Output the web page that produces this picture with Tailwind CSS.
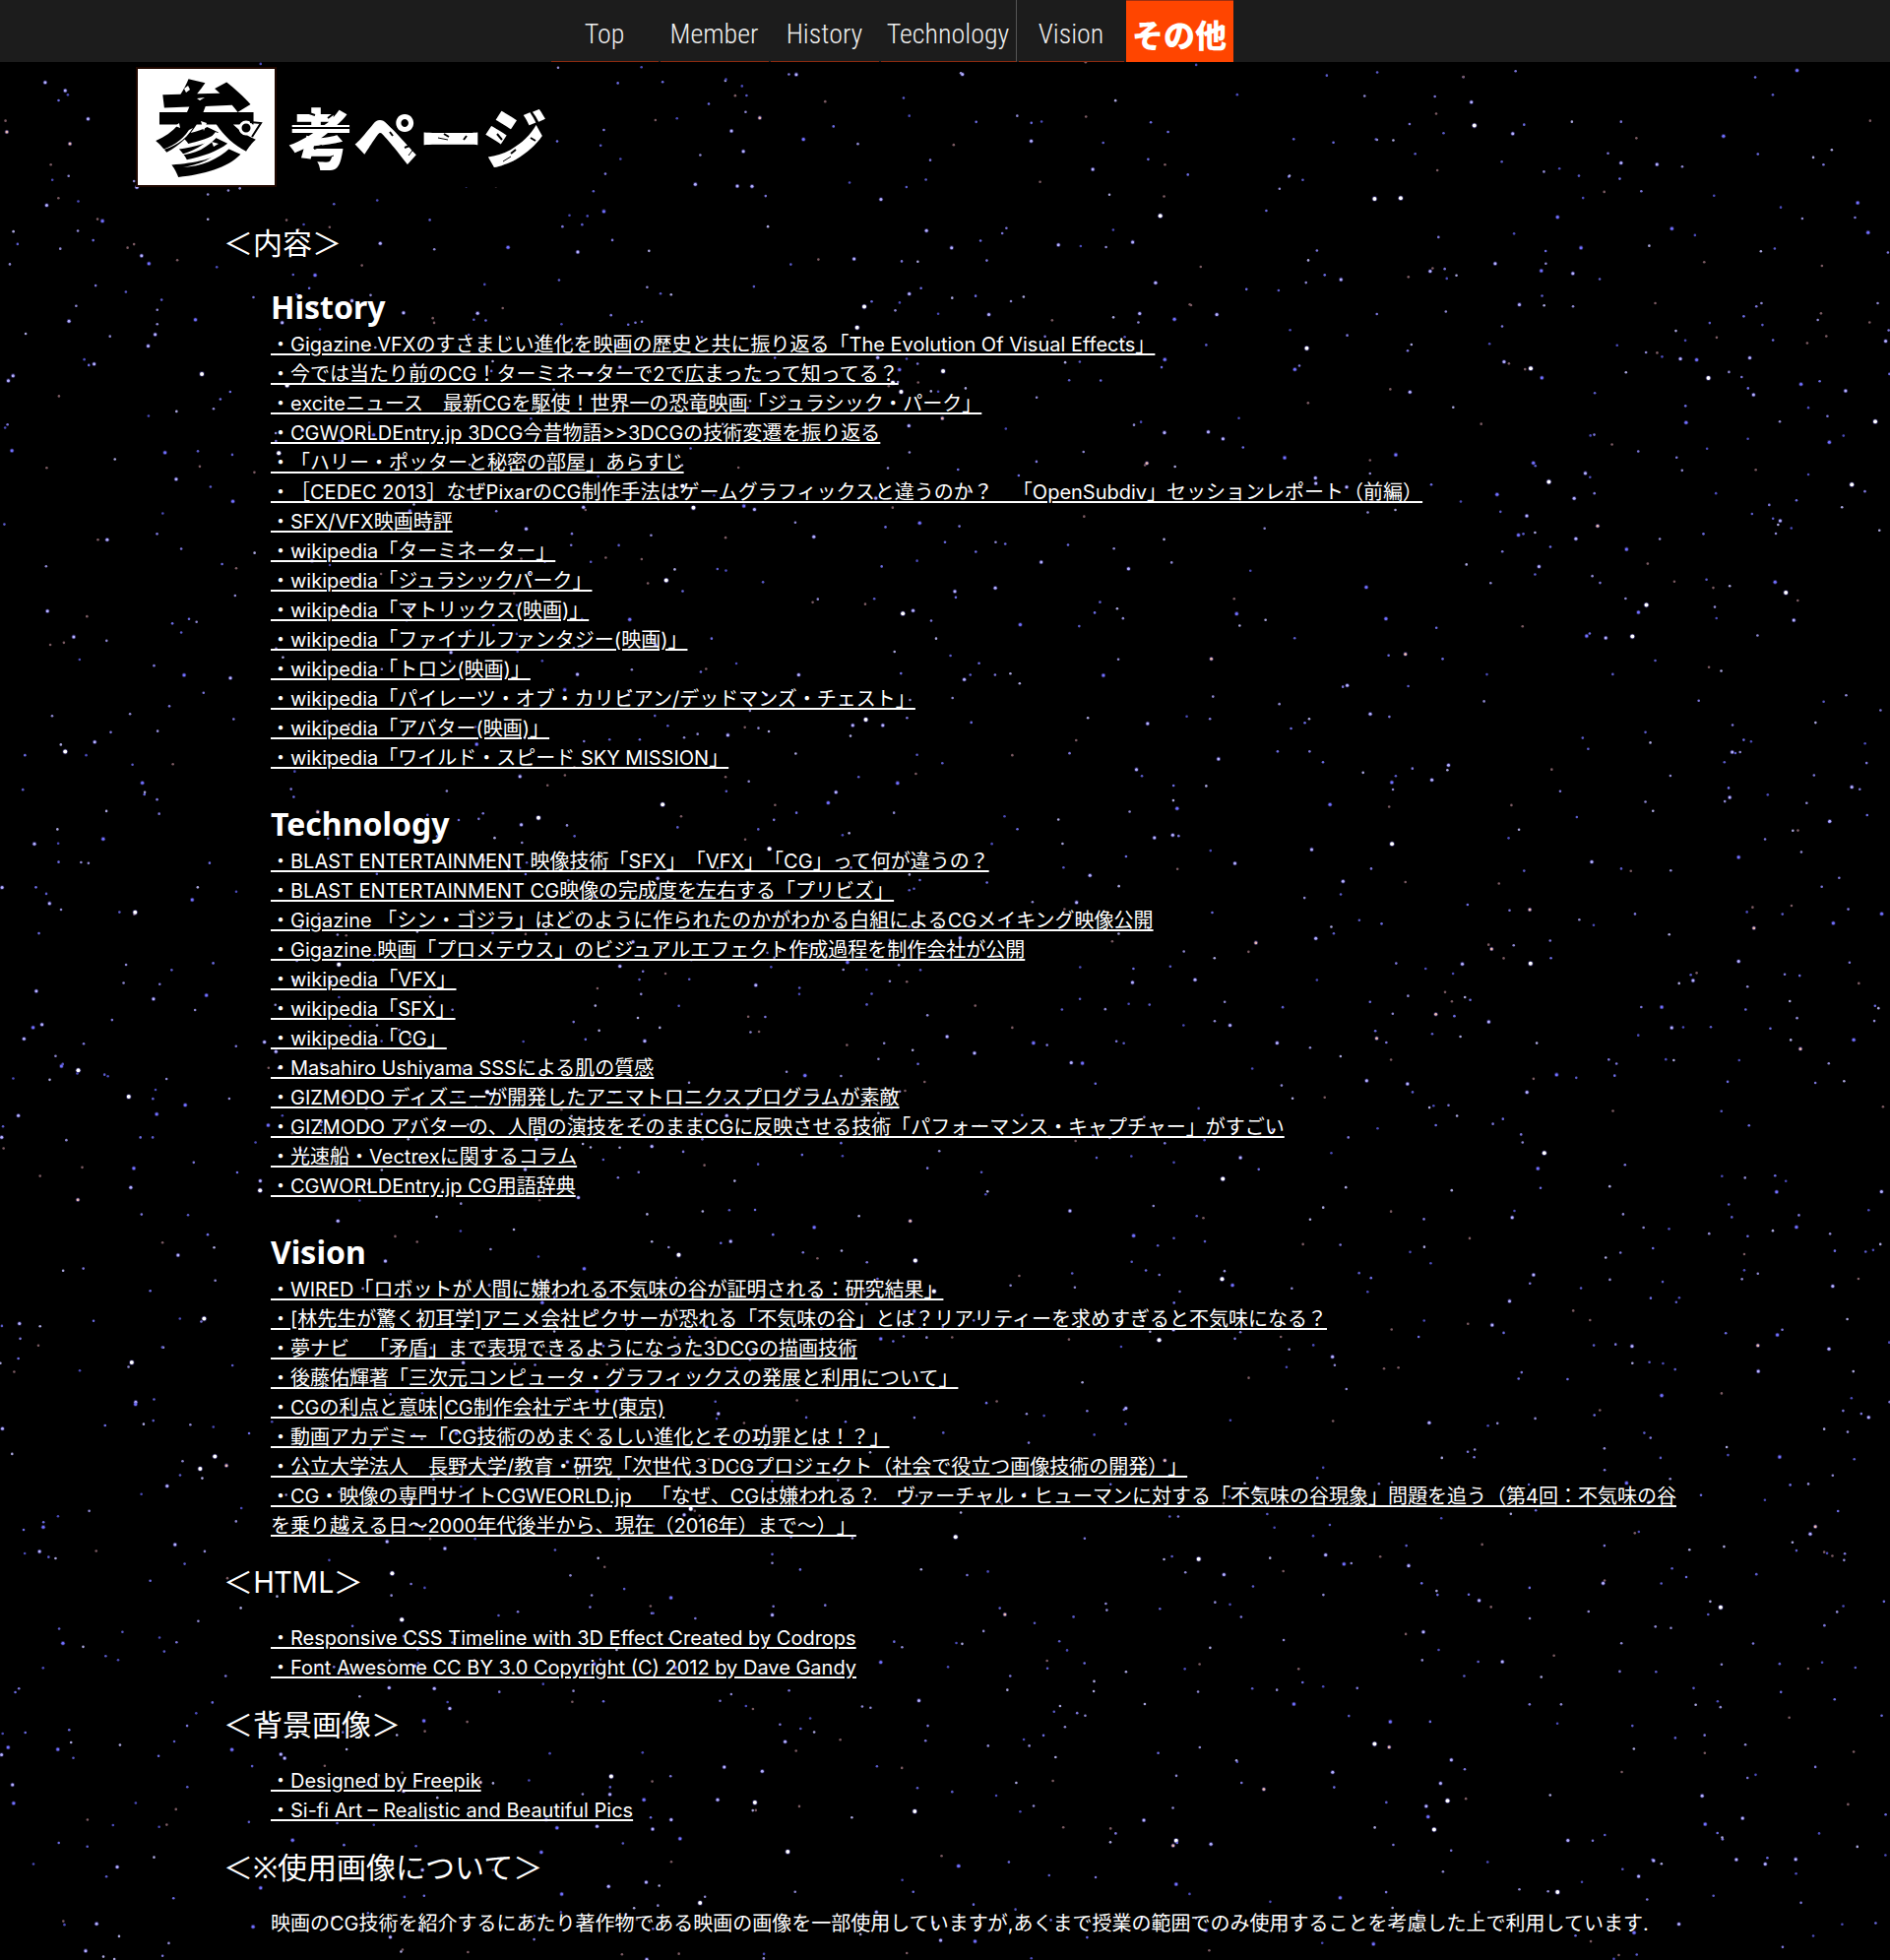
<!DOCTYPE html>
<html lang="ja">
<head>
<meta charset="utf-8">
<meta name="viewport" content="width=device-width, initial-scale=1">
<title>参考ページ</title>
<script src="https://cdn.jsdelivr.net/npm/@tailwindcss/browser@4"></script>
</head>
<body class="relative bg-black text-white font-['Noto_Sans','Noto_Sans_CJK_JP',sans-serif] text-[20px] leading-[30px] [text-spacing-trim:space-all]">
<svg id="stars" class="absolute inset-0 -z-10 h-full w-full" aria-hidden="true"></svg>

<nav class="flex h-[63px] justify-center gap-[2px] bg-[#1c1c1c] pr-[108px] font-['Roboto_Condensed','Liberation_Sans',sans-serif] text-[28px] leading-[70px] font-light text-[#eeeeee]">
  <a href="#" class="w-[109px] border-b border-[#8b2a10] text-center">Top</a>
  <a href="#" class="w-[110px] border-b border-[#8b2a10] text-center">Member</a>
  <a href="#" class="w-[110px] border-b border-[#8b2a10] text-center">History</a>
  <a href="#" class="w-[138px] border-b border-r border-b-[#8b2a10] border-r-[#555555] text-center">Technology</a>
  <a href="#" class="w-[107px] border-b border-[#8b2a10] text-center">Vision</a>
  <a href="#" class="w-[109px] border-t border-[#a03010] bg-[#ff4500] text-center font-['Noto_Sans_CJK_JP',sans-serif] text-[32px] leading-[67px] font-black text-white">その他</a>
</nav>

<header class="flex pt-[5px] pl-[138px]">
  <h1 class="flex items-start gap-3 bg-black font-['Noto_Sans_CJK_JP',sans-serif] font-black">
    <span class="relative block h-[122px] w-[143px] border-2 border-[#200800] bg-white text-center text-[104px] leading-[110px] text-black">参
      <svg class="absolute inset-0 h-full w-full" viewBox="0 0 139 118" fill="none" aria-hidden="true">
        <path d="M52 62C44 74 34 79 22 83C36 80 48 73 56 60ZM79 64C68 78 56 84 40 88C58 87 72 80 83 66ZM90 78C76 92 62 97 46 100C64 99 82 92 94 80Z" fill="#fff"/>
        <path d="M47 20l4-3 2 4-4 3zM60 30l8-1-5 3zM38 58l4-3 1 5zM64 53l6 2-3 8zM75 74l7 2-5 3z" fill="#fff"/>
        <circle cx="110" cy="60" r="6" fill="#000" stroke="#fff" stroke-width="3"/>
        <path d="M114 54l11 1-9 14" stroke="#000" stroke-width="2"/>
      </svg>
    </span>
    <span class="relative pt-[34px] text-[66px] leading-[70px]">考ページ
      <svg class="absolute top-[38px] left-0 h-[66px] w-[264px]" viewBox="0 0 264 66" fill="none" aria-hidden="true">
        <path d="M2 24h60M18 8l9 3M40 14l8-6M26 45l8-3M84 42l4 3M103 28l3 4M118 44l5-2M158 30l5 3M178 36l3-4M226 50l5-4M212 30l5 6M246 34l5 3" stroke="#000" stroke-width="2"/>
        <path d="M36 56l10-4M122 52l6-8M152 34l10 2M218 58l8-5" stroke="#000"/>
      </svg>
    </span>
  </h1>
</header>

<main class="pt-[34px] pr-[215px] pb-[22px] pl-[227px]">
  <h2 class="mb-5 text-[30px] leading-[45px]">＜内容＞</h2>
  <div class="flex flex-col gap-[29px] pl-12 font-['Inter','Noto_Sans_CJK_JP',sans-serif]">
    <section>
      <h3 class="font-['Noto_Sans',sans-serif] text-[32px] leading-[46px] font-bold">History</h3>
      <ul class="underline decoration-2 underline-offset-2">
        <li><a href="#">・Gigazine VFXのすさまじい進化を映画の歴史と共に振り返る「The Evolution Of Visual Effects」</a></li>
        <li><a href="#">・今では当たり前のCG！ターミネーターで2で広まったって知ってる？</a></li>
        <li><a href="#">・exciteニュース　最新CGを駆使！世界一の恐竜映画「ジュラシック・パーク」</a></li>
        <li><a href="#">・CGWORLDEntry.jp 3DCG今昔物語&gt;&gt;3DCGの技術変遷を振り返る</a></li>
        <li><a href="#">・「ハリー・ポッターと秘密の部屋」あらすじ</a></li>
        <li><a href="#">・［CEDEC 2013］なぜPixarのCG制作手法はゲームグラフィックスと違うのか？　「OpenSubdiv」セッションレポート（前編）</a></li>
        <li><a href="#">・SFX/VFX映画時評</a></li>
        <li><a href="#">・wikipedia「ターミネーター」</a></li>
        <li><a href="#">・wikipedia「ジュラシックパーク」</a></li>
        <li><a href="#">・wikipedia「マトリックス(映画)」</a></li>
        <li><a href="#">・wikipedia「ファイナルファンタジー(映画)」</a></li>
        <li><a href="#">・wikipedia「トロン(映画)」</a></li>
        <li><a href="#">・wikipedia「パイレーツ・オブ・カリビアン/デッドマンズ・チェスト」</a></li>
        <li><a href="#">・wikipedia「アバター(映画)」</a></li>
        <li><a href="#">・wikipedia「ワイルド・スピード SKY MISSION」</a></li>
      </ul>
    </section>
    <section>
      <h3 class="font-['Noto_Sans',sans-serif] text-[32px] leading-[46px] font-bold">Technology</h3>
      <ul class="underline decoration-2 underline-offset-2">
        <li><a href="#">・BLAST ENTERTAINMENT 映像技術「SFX」「VFX」「CG」って何が違うの？</a></li>
        <li><a href="#">・BLAST ENTERTAINMENT CG映像の完成度を左右する「プリビズ」</a></li>
        <li><a href="#">・Gigazine 「シン・ゴジラ」はどのように作られたのかがわかる白組によるCGメイキング映像公開</a></li>
        <li><a href="#">・Gigazine 映画「プロメテウス」のビジュアルエフェクト作成過程を制作会社が公開</a></li>
        <li><a href="#">・wikipedia「VFX」</a></li>
        <li><a href="#">・wikipedia「SFX」</a></li>
        <li><a href="#">・wikipedia「CG」</a></li>
        <li><a href="#">・Masahiro Ushiyama SSSによる肌の質感</a></li>
        <li><a href="#">・GIZMODO ディズニーが開発したアニマトロニクスプログラムが素敵</a></li>
        <li><a href="#">・GIZMODO アバターの、人間の演技をそのままCGに反映させる技術「パフォーマンス・キャプチャー」がすごい</a></li>
        <li><a href="#">・光速船・Vectrexに関するコラム</a></li>
        <li><a href="#">・CGWORLDEntry.jp CG用語辞典</a></li>
      </ul>
    </section>
    <section>
      <h3 class="font-['Noto_Sans',sans-serif] text-[32px] leading-[46px] font-bold">Vision</h3>
      <ul class="underline decoration-2 underline-offset-2">
        <li><a href="#">・WIRED「ロボットが人間に嫌われる不気味の谷が証明される：研究結果」</a></li>
        <li><a href="#">・[林先生が驚く初耳学]アニメ会社ピクサーが恐れる「不気味の谷」とは？リアリティーを求めすぎると不気味になる？</a></li>
        <li><a href="#">・夢ナビ　「矛盾」まで表現できるようになった3DCGの描画技術</a></li>
        <li><a href="#">・後藤佑輝著「三次元コンピュータ・グラフィックスの発展と利用について」</a></li>
        <li><a href="#">・CGの利点と意味|CG制作会社デキサ(東京)</a></li>
        <li><a href="#">・動画アカデミー「CG技術のめまぐるしい進化とその功罪とは！？」</a></li>
        <li><a href="#">・公立大学法人　長野大学/教育・研究「次世代３DCGプロジェクト（社会で役立つ画像技術の開発）」</a></li>
        <li><a href="#">・CG・映像の専門サイトCGWEORLD.jp　「なぜ、CGは嫌われる？　ヴァーチャル・ヒューマンに対する「不気味の谷現象」問題を追う（第4回：不気味の谷を乗り越える日～2000年代後半から、現在（2016年）まで～）」</a></li>
      </ul>
    </section>
  </div>

  <h2 class="mt-[19px] mb-5 text-[30px] leading-[45px]">＜HTML＞</h2>
  <ul class="pl-12 font-['Inter','Noto_Sans_CJK_JP',sans-serif] underline decoration-2 underline-offset-2">
    <li><a href="#">・Responsive CSS Timeline with 3D Effect Created by Codrops</a></li>
    <li><a href="#">・Font Awesome CC BY 3.0 Copyright (C) 2012 by Dave Gandy</a></li>
  </ul>

  <h2 class="my-5 text-[30px] leading-[45px]">＜背景画像＞</h2>
  <ul class="pl-12 font-['Inter','Noto_Sans_CJK_JP',sans-serif] underline decoration-2 underline-offset-2">
    <li><a href="#">・Designed by Freepik</a></li>
    <li><a href="#">・Si-fi Art – Realistic and Beautiful Pics</a></li>
  </ul>

  <h2 class="my-5 text-[30px] leading-[45px]">＜※使用画像について＞</h2>
  <p class="pl-12 font-['Inter','Noto_Sans_CJK_JP',sans-serif]">映画のCG技術を紹介するにあたり著作物である映画の画像を一部使用していますが,あくまで授業の範囲でのみ使用することを考慮した上で利用しています.</p>
</main>

<script>
  // Star field: seeded so that it looks the same on every load, spread in percent of the page.
  let seed = 20170;
  const rnd = () => (seed = (seed * 16807) % 2147483647) / 2147483647;
  const dim = ['#5a5ac8', '#7a74d8', '#4a4ab8', '#8c86d0', '#6a6ae0', '#a8a4dc', '#7a5a62'];
  let stars = '';
  for (let i = 0; i < 2400; i++) {
    const x = (rnd() * 100).toFixed(2), y = (rnd() * 100).toFixed(2);
    const size = rnd(), tone = rnd();
    if (size < 0.78) {
      stars += `<circle cx="${x}%" cy="${y}%" r="1.3" fill="${dim[Math.floor(tone * dim.length)]}"/>`;
    } else {
      const c = size > 0.97 ? '#ffffff' : tone < 0.08 ? '#e8b8b0' : tone < 0.4 ? '#7070ff' : '#b4b0ff';
      const r = size > 0.97 ? 2 : 1.5;
      stars += `<circle cx="${x}%" cy="${y}%" r="${r + 0.8}" fill="#5a50c0" opacity="0.45"/><circle cx="${x}%" cy="${y}%" r="${r}" fill="${c}"/>`;
    }
  }
  document.getElementById('stars').innerHTML = stars;
</script>
</body>
</html>
